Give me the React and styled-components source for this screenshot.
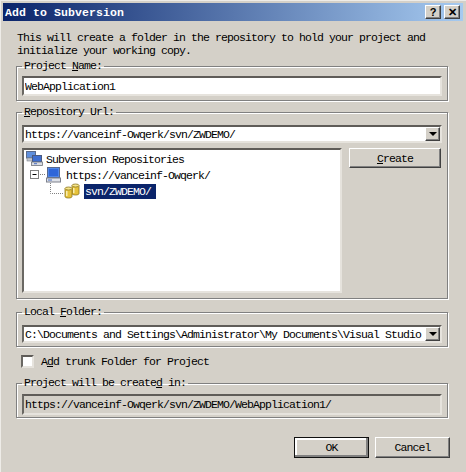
import React from "react";
import styled, { createGlobalStyle, css } from "styled-components";

const GlobalStyle = createGlobalStyle`
  html, body {
    margin: 0;
    padding: 0;
    background: #d4d0c8;
  }
  * {
    box-sizing: border-box;
  }
`;

const monoFont = css`
  font-family: "Liberation Mono", "Noto Sans CJK SC", monospace;
  font-size: 11.5px;
  letter-spacing: -0.9px;
  color: #000000;
`;

const sunken = css`
  border-style: solid;
  border-width: 2px;
  border-color: #5f5c58 #e6e3dd #e6e3dd #6a6863;
`;

const raised = css`
  border: 1px solid;
  border-color: #ffffff #404040 #404040 #ffffff;
  box-shadow: inset -1px -1px 0 #808080;
`;

const Dialog = styled.div`
  width: 466px;
  height: 472px;
  padding: 3px;
  background: #d4d0c8;
  box-shadow: inset 1px 1px 0 #eeece8;
  overflow: hidden;
`;

const TitleBar = styled.div`
  display: flex;
  align-items: center;
  justify-content: space-between;
  height: 18px;
  padding: 0 3px 0 2px;
  background: linear-gradient(90deg, #0a246a 0%, #a6caf0 100%);
`;

const Title = styled.span`
  font-family: "Liberation Mono", "Noto Sans CJK SC", monospace;
  font-size: 11.5px;
  font-weight: 700;
  letter-spacing: 0.1px;
  color: #ffffff;
`;

const TitleButtons = styled.div`
  display: flex;
  gap: 3px;
`;

const TitleButton = styled.button`
  ${raised}
  display: flex;
  align-items: center;
  justify-content: center;
  width: 16px;
  height: 14px;
  padding: 0;
  background: #d4d0c8;
  font-family: "Liberation Sans", sans-serif;
  font-size: 11px;
  font-weight: 700;
  color: #000000;
`;

const Content = styled.div`
  display: flex;
  flex-direction: column;
  padding: 10px 15px 0 13px;
`;

const Intro = styled.p`
  ${monoFont}
  margin: 0 0 3px 1px;
  height: 26px;
  line-height: 13px;
`;

const Group = styled.fieldset`
  margin: ${(p) => p.$mt || 0}px 0 0;
  padding: ${(p) => p.$pt}px 5px ${(p) => p.$pb}px;
  min-width: 0;
  border: 1px solid #808080;
  box-shadow: 1px 1px 0 #ffffff, inset 1px 1px 0 #ffffff;
`;

const Legend = styled.legend`
  ${monoFont}
  padding: 0 2px;
  height: 12px;
  line-height: 12px;
`;

const TextField = styled.input`
  ${monoFont}
  ${sunken}
  display: block;
  width: 100%;
  height: ${(p) => p.$h}px;
  padding: 0 1px;
  background: ${(p) => (p.$disabled ? "#d4d0c8" : "#ffffff")};
  outline: none;
`;

const Combo = styled.div`
  ${sunken}
  display: flex;
  align-items: stretch;
  width: 100%;
  height: 18px;
  background: #ffffff;
`;

const ComboInput = styled.input`
  ${monoFont}
  flex: 1;
  min-width: 0;
  padding: 0 1px;
  border: 0;
  background: transparent;
  outline: none;
`;

const ComboArrow = styled.button`
  ${raised}
  display: flex;
  align-items: center;
  justify-content: center;
  width: 15px;
  padding: 0;
  background: #d4d0c8;
`;

const ArrowGlyph = styled.span`
  width: 0;
  height: 0;
  border-left: 4px solid transparent;
  border-right: 4px solid transparent;
  border-top: 4px solid #000000;
`;

const RepoRow = styled.div`
  display: flex;
  gap: 7px;
  margin-top: 5px;
`;

const Tree = styled.div`
  ${sunken}
  width: 320px;
  height: 145px;
  padding-top: 1px;
  background: #ffffff;
`;

const TreeRow = styled.div`
  display: flex;
  align-items: center;
  height: 16px;
  padding-left: ${(p) => p.$indent}px;
  gap: ${(p) => p.$gap || 0}px;
`;

const TreeLabel = styled.span`
  ${monoFont}
  margin-left: ${(p) => p.$ml || 0}px;
  white-space: nowrap;
`;

const SelectedLabel = styled.span`
  ${monoFont}
  display: flex;
  align-items: center;
  width: 72px;
  height: 15px;
  margin-left: 4px;
  padding-left: 1px;
  background: #0a246a;
  color: #ffffff;
  white-space: nowrap;
`;

const Button = styled.button`
  ${monoFont}
  ${raised}
  width: ${(p) => p.$w}px;
  height: ${(p) => p.$h}px;
  padding: 0;
  background: #d4d0c8;
`;

const DefaultButton = styled(Button)`
  outline: 1px solid #101010;
  outline-offset: -1px;
  box-shadow: inset -2px -2px 0 #808080, inset 2px 2px 0 #ffffff;
`;

const CheckRow = styled.label`
  display: flex;
  align-items: center;
  gap: 7px;
  height: 13px;
  margin: 8px 0 9px 5px;
`;

const CheckBox = styled.input`
  ${sunken}
  appearance: none;
  flex: none;
  width: 13px;
  height: 13px;
  margin: 0;
  background: #ffffff;
`;

const CheckText = styled.span`
  ${monoFont}
`;

const Footer = styled.div`
  display: flex;
  justify-content: flex-end;
  gap: 6px;
  margin: 19px -2px 0 0;
`;

const ServersIcon = () => (
  <svg width="17" height="16" viewBox="0 0 17 16">
    <rect x="0.5" y="0.5" width="9" height="6.5" fill="#5f8fdc" stroke="#5a6a8a" />
    <rect x="1" y="7" width="9" height="3" fill="#c4c8d0" stroke="#7c8088" strokeWidth="0.6" />
    <rect x="6.5" y="4.5" width="9" height="6.5" fill="#3f6fd0" stroke="#4a5a80" />
    <rect x="5.5" y="11" width="11" height="3.5" fill="#d8dce4" stroke="#70747c" strokeWidth="0.8" />
    <rect x="8" y="12.2" width="3" height="1" fill="#4a6ec0" />
  </svg>
);

const ComputerIcon = () => (
  <svg width="15" height="16" viewBox="0 0 15 16">
    <rect x="1.5" y="0.5" width="12" height="10" fill="#4f86e8" stroke="#58688c" />
    <rect x="3" y="2" width="9" height="7" fill="#2f66d8" />
    <rect x="0.5" y="11" width="14" height="4" fill="#dfe2e8" stroke="#7c808c" />
    <rect x="2" y="12.5" width="4" height="1" fill="#4a6ec0" />
  </svg>
);

const Cylinder = ({ x, y, h }) => (
  <g>
    <path
      d={`M${x} ${y + 1.5}V${y + h - 1.5}C${x} ${y + h + 0.5} ${x + 7} ${y + h + 0.5} ${x + 7} ${y + h - 1.5}V${y + 1.5}`}
      fill="#e6c23a"
      stroke="#8a7420"
      strokeWidth="0.8"
    />
    <ellipse cx={x + 3.5} cy={y + 1.5} rx="3.5" ry="1.5" fill="#f7e68a" stroke="#8a7420" strokeWidth="0.8" />
    <rect x={x + 1} y={y + 4} width="1.5" height={h - 6} fill="#f8eeb0" />
  </g>
);

const RepoIcon = () => (
  <svg width="16" height="16" viewBox="0 0 16 16">
    <Cylinder x={8} y={1} h={11} />
    <Cylinder x={1} y={4} h={11} />
  </svg>
);

const Expander = () => (
  <svg width="16" height="16" viewBox="0 0 16 16">
    <rect x="0.5" y="3.5" width="8" height="8" fill="#ffffff" stroke="#808080" />
    <path d="M2.5 7.5H6.5" stroke="#000000" />
    <path d="M10 7.5H16" stroke="#808080" strokeDasharray="1 1" />
  </svg>
);

const Elbow = () => (
  <svg width="18" height="16" viewBox="0 0 18 16">
    <path d="M4.5 0V10.5H18" fill="none" stroke="#808080" strokeDasharray="1 1" />
  </svg>
);

const Dropdown = ({ value }) => (
  <Combo>
    <ComboInput readOnly value={value} />
    <ComboArrow>
      <ArrowGlyph />
    </ComboArrow>
  </Combo>
);

export default function App() {
  return (
    <Dialog>
      <GlobalStyle />
      <TitleBar>
        <Title>Add to Subversion</Title>
        <TitleButtons>
          <TitleButton>?</TitleButton>
          <TitleButton>✕</TitleButton>
        </TitleButtons>
      </TitleBar>
      <Content>
        <Intro>
          This will create a folder in the repository to hold your project and
          <br />
          initialize your working copy.
        </Intro>

        <Group $pt={4} $pb={4}>
          <Legend>
            Project <u>N</u>ame:
          </Legend>
          <TextField $h={20} readOnly value="WebApplication1" />
        </Group>

        <Group $mt={5} $pt={7} $pb={5}>
          <Legend>
            <u>R</u>epository Url:
          </Legend>
          <Dropdown value="https://vanceinf-Owqerk/svn/ZWDEMO/" />
          <RepoRow>
            <Tree>
              <TreeRow $indent={2} $gap={3}>
                <ServersIcon />
                <TreeLabel>Subversion Repositories</TreeLabel>
              </TreeRow>
              <TreeRow $indent={6}>
                <Expander />
                <ComputerIcon />
                <TreeLabel $ml={5}>https://vanceinf-Owqerk/</TreeLabel>
              </TreeRow>
              <TreeRow $indent={22}>
                <Elbow />
                <RepoIcon />
                <SelectedLabel>svn/ZWDEMO/</SelectedLabel>
              </TreeRow>
            </Tree>
            <Button $w={92} $h={20}>
              <u>C</u>reate
            </Button>
          </RepoRow>
        </Group>

        <Group $mt={7} $pt={7} $pb={3}>
          <Legend>
            Local <u>F</u>older:
          </Legend>
          <Dropdown value="C:\Documents and Settings\Administrator\My Documents\Visual Studio 2005\Projects" />
        </Group>

        <CheckRow>
          <CheckBox type="checkbox" />
          <CheckText>
            A<u>d</u>d trunk Folder for Project
          </CheckText>
        </CheckRow>

        <Group $pt={5} $pb={2}>
          <Legend>
            Project will be create<u>d</u> in:
          </Legend>
          <TextField $h={21} $disabled readOnly value="https://vanceinf-Owqerk/svn/ZWDEMO/WebApplication1/" />
        </Group>

        <Footer>
          <DefaultButton $w={75} $h={21}>
            OK
          </DefaultButton>
          <Button $w={75} $h={21}>
            Cancel
          </Button>
        </Footer>
      </Content>
    </Dialog>
  );
}
